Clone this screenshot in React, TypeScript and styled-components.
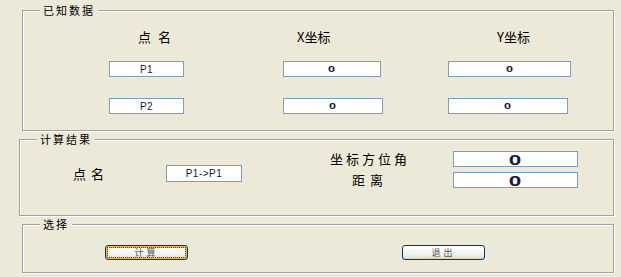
import React from 'react'
import styled, { createGlobalStyle } from 'styled-components'

const GlobalStyle = createGlobalStyle`
  html, body {
    margin: 0;
    padding: 0;
    background: #ece9d8;
  }
  body {
    font-family: "Noto Sans CJK SC", "Liberation Sans", sans-serif;
    color: #000;
  }
`

const Page = styled.div`
  width: 621px;
  height: 277px;
  box-sizing: border-box;
  padding-top: 10px;
  display: flex;
  flex-direction: column;
  gap: 8px;
`

const Group = styled.section<{ $left: number; $height: number }>`
  position: relative;
  box-sizing: border-box;
  margin-left: ${(p) => p.$left}px;
  width: ${(p) => 614 - p.$left}px;
  height: ${(p) => p.$height}px;
  border: 1px solid #a0a0a0;
  box-shadow: inset 1px 1px 0 #fff, 1px 1px 0 #fff;
`

const GroupTitle = styled.span`
  position: absolute;
  top: -8px;
  left: 17px;
  padding: 0 3px;
  background: #ece9d8;
  font-size: 11px;
  line-height: 14px;
  letter-spacing: 2px;
`

const DataGrid = styled.div`
  display: grid;
  grid-template-columns: 174px 165px 130px;
  grid-template-rows: 32px 37px 16px;
  padding: 18px 0 0 86px;
`

const ColHeader = styled.div<{ $offset: number; $spacing?: number }>`
  margin-left: ${(p) => p.$offset}px;
  font-size: 13px;
  line-height: 16px;
  letter-spacing: ${(p) => p.$spacing ?? 0}px;
  white-space: nowrap;
`

const Field = styled.div<{ $width: number; $height?: number; $big?: boolean }>`
  box-sizing: border-box;
  width: ${(p) => p.$width}px;
  height: ${(p) => p.$height ?? 16}px;
  border: 1px solid #7f9db9;
  background: #fff;
  display: flex;
  align-items: center;
  justify-content: center;
  font-family: "Liberation Sans", sans-serif;
  font-size: ${(p) => (p.$big ? 15 : 10)}px;
  font-weight: ${(p) => (p.$big ? 700 : 400)};
  color: #1c1838;
  letter-spacing: 0.5px;
`

const Zero = styled.span<{ $big?: boolean }>`
  display: inline-block;
  transform: scaleX(${(p) => (p.$big ? 1.5 : 1.4)});
  font-size: ${(p) => (p.$big ? 15 : 9)}px;
  font-weight: 700;
`

const ResultBody = styled.div`
  display: flex;
  align-items: flex-start;
  padding-left: 53px;
`

const PointPart = styled.div`
  display: flex;
  align-items: center;
  gap: 57px;
  padding-top: 25px;
`

const Label = styled.span<{ $spacing?: number }>`
  font-size: 13px;
  line-height: 16px;
  letter-spacing: ${(p) => p.$spacing ?? 3}px;
  white-space: nowrap;
`

const ResultGrid = styled.div`
  display: grid;
  grid-template-columns: 80px 125px;
  column-gap: 43px;
  row-gap: 5px;
  align-items: center;
  justify-items: center;
  margin-left: 88px;
  padding-top: 11px;
`

const ButtonRow = styled.div`
  display: flex;
  gap: 214px;
  padding: 20px 0 0 82px;
`

const Button = styled.button<{ $focused?: boolean }>`
  position: relative;
  box-sizing: border-box;
  width: 83px;
  height: 15px;
  padding: 0;
  border: 1px solid #003c74;
  border-radius: 3px;
  background: linear-gradient(#ffffff, #f3f3ef 60%, #dedcd2);
  box-shadow: ${(p) => (p.$focused ? 'inset 0 0 0 2px #eab54a' : 'inset 0 -1px 0 #d6d0c5')};
  font-family: "Noto Sans CJK SC", sans-serif;
  font-size: 9px;
  line-height: 12px;
  color: #555;
  letter-spacing: 3px;

  &::after {
    content: '';
    display: ${(p) => (p.$focused ? 'block' : 'none')};
    position: absolute;
    inset: 1px;
    border: 1px dotted #6b4a10;
  }
`

export default function App() {
  return (
    <>
      <GlobalStyle />
      <Page>
        <Group $left={22} $height={121}>
          <GroupTitle>已知数据</GroupTitle>
          <DataGrid>
            <ColHeader $offset={29} $spacing={7}>点名</ColHeader>
            <ColHeader $offset={14}>X坐标</ColHeader>
            <ColHeader $offset={49}>Y坐标</ColHeader>

            <Field $width={75}>P1</Field>
            <Field $width={98}><Zero>0</Zero></Field>
            <Field $width={123}><Zero>0</Zero></Field>

            <Field $width={75}>P2</Field>
            <Field $width={100}><Zero>0</Zero></Field>
            <Field $width={120}><Zero>0</Zero></Field>
          </DataGrid>
        </Group>

        <Group $left={19} $height={77}>
          <GroupTitle>计算结果</GroupTitle>
          <ResultBody>
            <PointPart>
              <Label $spacing={5}>点名</Label>
              <Field $width={76} $height={17}>P1-&gt;P1</Field>
            </PointPart>
            <ResultGrid>
              <Label $spacing={3}>坐标方位角</Label>
              <Field $width={125} $big><Zero $big>0</Zero></Field>
              <Label $spacing={5}>距离</Label>
              <Field $width={125} $big><Zero $big>0</Zero></Field>
            </ResultGrid>
          </ResultBody>
        </Group>

        <Group $left={22} $height={49}>
          <GroupTitle>选择</GroupTitle>
          <ButtonRow>
            <Button $focused>计算</Button>
            <Button>退出</Button>
          </ButtonRow>
        </Group>
      </Page>
    </>
  )
}
